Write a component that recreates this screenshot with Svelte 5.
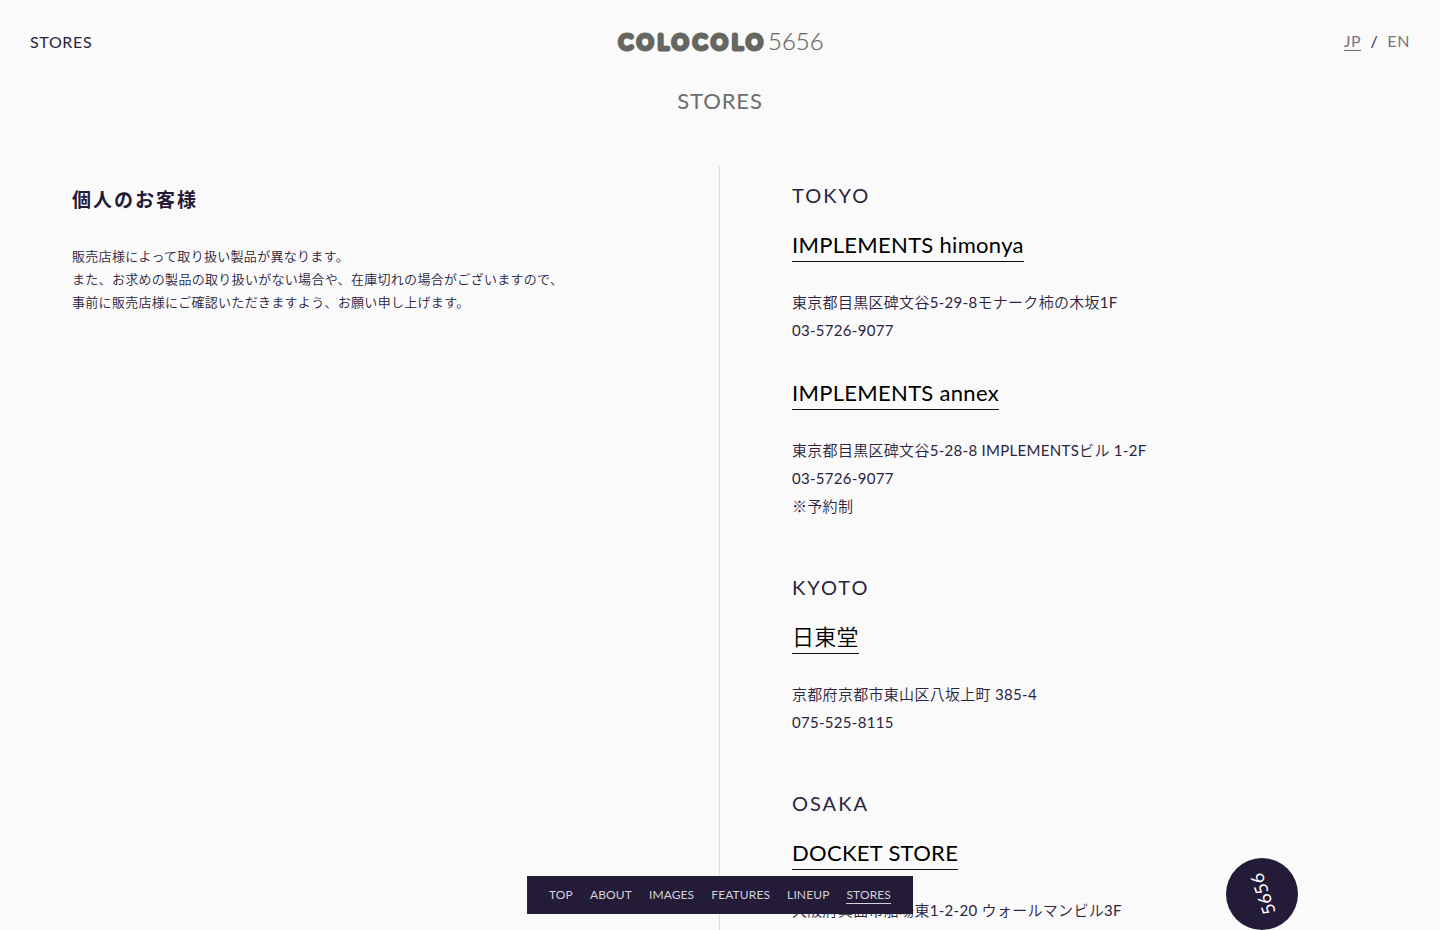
<script>
  const areas = [
    {
      name: 'TOKYO',
      stores: [
        { name: 'IMPLEMENTS himonya', lines: ['東京都目黒区碑文谷5-29-8モナーク柿の木坂1F', '03-5726-9077'] },
        { name: 'IMPLEMENTS annex', lines: ['東京都目黒区碑文谷5-28-8 IMPLEMENTSビル 1-2F', '03-5726-9077', '※予約制'] }
      ]
    },
    {
      name: 'KYOTO',
      stores: [{ name: '日東堂', lines: ['京都府京都市東山区八坂上町 385-4', '075-525-8115'] }]
    },
    {
      name: 'OSAKA',
      stores: [{ name: 'DOCKET STORE', lines: ['大阪府箕面市船場東1-2-20 ウォールマンビル3F'] }]
    }
  ];
  const menu = ['TOP', 'ABOUT', 'IMAGES', 'FEATURES', 'LINEUP', 'STORES'];
</script>

<div class="page" lang="ja">
  <header>
    <span class="current">STORES</span>
    <a class="logo" href="#top" aria-label="COLOCOLO 5656">
      <svg width="216" height="36" viewBox="0 0 216 36" aria-hidden="true">
        <text class="word" x="7" y="25">COLOCOLO</text>
        <text class="digits" x="156" y="26">5656</text>
      </svg>
    </a>
    <div class="lang">
      <a class="on" href="#jp">JP</a><span>/</span><a href="#en">EN</a>
    </div>
  </header>

  <h1>STORES</h1>

  <main>
    <section class="intro">
      <h2>個人のお客様</h2>
      <p>
        販売店様によって取り扱い製品が異なります。<br />
        また、お求めの製品の取り扱いがない場合や、在庫切れの場合がございますので、<br />
        事前に販売店様にご確認いただきますよう、お願い申し上げます。
      </p>
    </section>

    <div class="areas">
      {#each areas as area}
        <section class="area">
          <h2>{area.name}</h2>
          <div class="stores">
            {#each area.stores as store}
              <article>
                <h3><a href="#store">{store.name}</a></h3>
                <address>
                  {#each store.lines as line}<span>{line}</span>{/each}
                </address>
              </article>
            {/each}
          </div>
        </section>
      {/each}
    </div>
  </main>

  <nav>
    {#each menu as item}
      <a class:on={item === 'STORES'} href="#{item.toLowerCase()}">{item}</a>
    {/each}
  </nav>

  <a class="badge" href="#lineup"><span>5656</span></a>
</div>

<style>
  :global(body) {
    margin: 0;
    background: #fafafa;
  }
  .page {
    display: flex;
    flex-direction: column;
    min-height: 100vh;
    color: #2b2440;
    font-family: Lato, 'Noto Sans CJK JP DemiLight', 'Noto Sans CJK JP Light', 'Noto Sans CJK JP', sans-serif;
    font-size: 15px;
    letter-spacing: 0.02em;
  }
  a {
    color: inherit;
    text-decoration: none;
  }
  h1,
  h2,
  h3,
  p {
    margin: 0;
    font-weight: 400;
  }
  header {
    display: grid;
    grid-template-columns: 1fr auto 1fr;
    align-items: center;
    height: 83px;
    padding: 0 30px;
    box-sizing: border-box;
    font-size: 16px;
    letter-spacing: 0.04em;
  }
  .logo,
  .logo svg {
    display: block;
    overflow: visible;
  }
  .word {
    font-size: 20px;
    font-weight: 300;
    letter-spacing: 5px;
    fill: #676762;
    stroke: #676762;
    stroke-width: 5px;
    stroke-linecap: round;
    stroke-linejoin: round;
  }
  .digits {
    font-size: 24px;
    font-weight: 300;
    letter-spacing: 0;
    fill: #676762;
    stroke: #676762;
    stroke-width: 0.2px;
  }
  .lang {
    display: flex;
    justify-content: flex-end;
    gap: 9px;
    line-height: 18px;
  }
  .lang a {
    color: #77777a;
    border-bottom: 1px solid transparent;
  }
  .lang .on {
    border-color: #676762;
  }
  h1 {
    color: #6c6c68;
    font-size: 22px;
    line-height: 36px;
    letter-spacing: 0.04em;
    text-align: center;
  }
  main {
    flex: 1;
    display: grid;
    grid-template-columns: 1fr 1fr;
    margin-top: 47px;
  }
  .intro {
    padding: 18px 10% 0;
    border-right: 1px solid #dededf;
  }
  .intro h2 {
    color: #231b38;
    font-family: 'Noto Sans CJK JP', sans-serif;
    font-size: 19px;
    font-weight: 600;
    line-height: 30px;
    letter-spacing: 2px;
  }
  .intro p {
    margin-top: 31px;
    font-size: 13px;
    line-height: 23px;
    white-space: nowrap;
  }
  .areas {
    display: flex;
    flex-direction: column;
    gap: 53px;
    padding: 15px 10% 0;
  }
  .area h2 {
    font-size: 20px;
    line-height: 28px;
    letter-spacing: 2px;
  }
  .stores {
    display: flex;
    flex-direction: column;
    gap: 33px;
    margin-top: 20px;
  }
  h3 {
    display: flex;
    color: #000;
    font-size: 22px;
    line-height: 32px;
  }
  h3 a {
    border-bottom: 1px solid #111;
  }
  address {
    margin-top: 26px;
    font-style: normal;
    line-height: 28px;
  }
  address span {
    display: block;
  }
  nav {
    position: fixed;
    bottom: 16px;
    left: 50%;
    display: flex;
    gap: 17px;
    padding: 10px 22px;
    background: #231b38;
    color: #d4d2da;
    font-size: 12px;
    line-height: 17px;
    letter-spacing: 0.01em;
    transform: translateX(-50%);
  }
  nav a {
    border-bottom: 1px solid transparent;
  }
  nav .on {
    border-color: #d4d2da;
  }
  .badge {
    position: fixed;
    right: 142px;
    bottom: 0;
    display: grid;
    place-items: center;
    width: 72px;
    height: 72px;
    border-radius: 50%;
    background: #231b38;
    color: #fff;
    font-size: 18px;
  }
  .badge span {
    transform: rotate(-109deg);
  }
</style>
